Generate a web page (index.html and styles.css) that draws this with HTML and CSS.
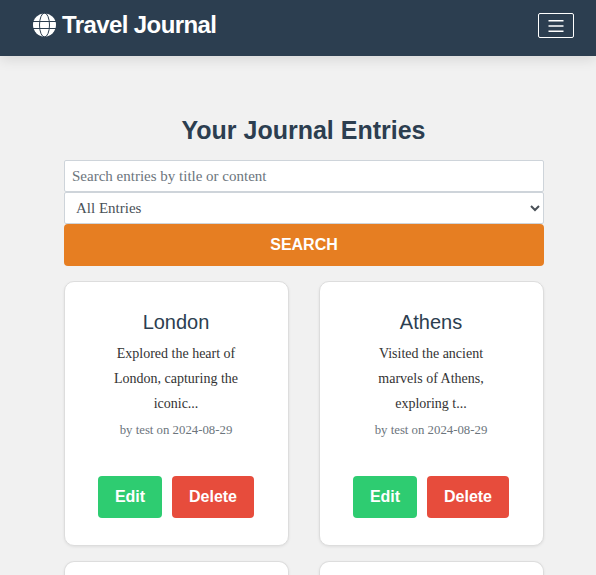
FILE: index.html
```html
<!DOCTYPE html>
<html lang="en">
<head>
<meta charset="utf-8">
<title>Travel Journal</title>
<link rel="stylesheet" href="styles.css">
</head>
<body>
<header class="navbar">
  <a class="brand">
    <svg class="globe" viewBox="0 0 24 24" aria-hidden="true">
      <circle cx="12" cy="12" r="11.5" fill="#fff"/>
      <g fill="none" stroke="#2c3e50" stroke-width="1">
        <ellipse cx="12" cy="12" rx="5" ry="12"/>
        <path d="M0 8.5h24M0 15.5h24"/>
      </g>
    </svg>
    <span>Travel Journal</span>
  </a>
  <button class="toggler" aria-label="Menu">
    <svg viewBox="0 0 20 20" width="20" height="20"><path d="M2.5 4.8h15M2.5 10h15M2.5 15.2h15" stroke="#fff" stroke-width="1.4"/></svg>
  </button>
</header>
<main class="container">
  <h1>Your Journal Entries</h1>
  <form class="search">
    <input type="text" placeholder="Search entries by title or content">
    <select><option>All Entries</option></select>
    <button type="button">SEARCH</button>
  </form>
  <section class="entries">
    <article class="card">
      <h2>London</h2>
      <p>Explored the heart of London, capturing the iconic...</p>
      <small>by test on 2024-08-29</small>
      <div class="actions"><button class="edit">Edit</button><button class="delete">Delete</button></div>
    </article>
    <article class="card">
      <h2>Athens</h2>
      <p>Visited the ancient marvels of Athens, exploring t...</p>
      <small>by test on 2024-08-29</small>
      <div class="actions"><button class="edit">Edit</button><button class="delete">Delete</button></div>
    </article>
    <article class="card next"></article>
    <article class="card next"></article>
  </section>
</main>
</body>
</html>
```
FILE: styles.css
```css
* { box-sizing: border-box; }
body {
  margin: 0;
  background: #f1f1f1;
  color: #333;
  font-family: "Liberation Serif", serif;
}
.navbar {
  display: flex;
  align-items: center;
  justify-content: space-between;
  height: 56px;
  padding: 0 22px 5px 32px;
  background: #2c3e50;
  box-shadow: 0 4px 12px rgba(0, 0, 0, 0.1);
}
.brand {
  display: flex;
  align-items: center;
  gap: 5px;
  padding-bottom: 1px;
  color: #fff;
  font: bold 24px/30px "Liberation Sans", sans-serif;
  letter-spacing: -0.6px;
  white-space: nowrap;
}
.globe { width: 25px; height: 24px; }
.toggler {
  display: flex;
  align-items: center;
  justify-content: center;
  width: 36px;
  height: 25px;
  padding: 0;
  border: 1px solid #fff;
  border-radius: 2px;
  background: none;
}
.container { width: 480px; margin: 0 0 0 64px; padding-top: 58px; }
h1 {
  height: 46px;
  margin: 0;
  padding-right: 1px;
  color: #2c3e50;
  font: bold 25px/32px "Liberation Sans", sans-serif;
  text-align: center;
}
.search { display: flex; flex-direction: column; }
.search input, .search select {
  width: 100%;
  height: 32px;
  border: 1px solid #ced4da;
  border-radius: 2px;
  background: #fff;
  color: #495057;
  font: 15px "Liberation Serif", serif;
}
.search input { padding: 0 7px; }
.search input::placeholder { color: #6c757d; opacity: 1; }
.search select { padding: 0 1px 0 7px; }
button { font: bold 16px "Liberation Sans", sans-serif; }
.search button, .actions button {
  height: 42px;
  padding: 0;
  border: 0;
  border-radius: 4px;
  color: #fff;
}
.search button { background: #e67e22; }
.entries {
  display: grid;
  grid-template-columns: 225px 225px;
  grid-template-rows: 265px 14px;
  gap: 15px 30px;
  height: 294px;
  margin: 15px -6px 0;
  padding: 0 6px;
  overflow: hidden;
}
.card {
  padding: 27px 33px;
  border: 1px solid #ddd;
  border-radius: 10px;
  background: #fff;
  box-shadow: 0 1px 3px rgba(0, 0, 0, 0.08);
  text-align: center;
}
.card.next {
  padding: 0;
  border-bottom: 0;
  border-radius: 10px 10px 0 0;
}
.card h2 {
  margin: 0 1px 6px 0;
  color: #2c3e50;
  font: 20px/26px "Liberation Sans", sans-serif;
}
.card p { margin: 0 1px 0 0; padding: 0 12px; font-size: 14px; line-height: 25px; }
.card small { display: block; margin-top: 1px; padding-right: 1px; color: #6c757d; font-size: 12.8px; line-height: 26px; }
.actions { display: flex; gap: 10px; margin-top: 33px; }
.edit { width: 64px; background: #2ecc71; }
.delete { width: 82px; background: #e74c3c; }
```
